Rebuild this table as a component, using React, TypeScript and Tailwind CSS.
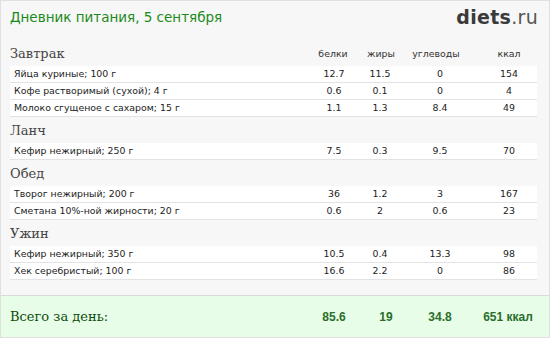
import React from "react";

type Item = { name: string; b: string; f: string; c: string; k: string };

const meals: { title: string; items: Item[] }[] = [
  {
    title: "Завтрак",
    items: [
      { name: "Яйца куриные; 100 г", b: "12.7", f: "11.5", c: "0", k: "154" },
      { name: "Кофе растворимый (сухой); 4 г", b: "0.6", f: "0.1", c: "0", k: "4" },
      { name: "Молоко сгущеное с сахаром; 15 г", b: "1.1", f: "1.3", c: "8.4", k: "49" },
    ],
  },
  {
    title: "Ланч",
    items: [{ name: "Кефир нежирный; 250 г", b: "7.5", f: "0.3", c: "9.5", k: "70" }],
  },
  {
    title: "Обед",
    items: [
      { name: "Творог нежирный; 200 г", b: "36", f: "1.2", c: "3", k: "167" },
      { name: "Сметана 10%-ной жирности; 20 г", b: "0.6", f: "2", c: "0.6", k: "23" },
    ],
  },
  {
    title: "Ужин",
    items: [
      { name: "Кефир нежирный; 350 г", b: "10.5", f: "0.4", c: "13.3", k: "98" },
      { name: "Хек серебристый; 100 г", b: "16.6", f: "2.2", c: "0", k: "86" },
    ],
  },
];

const sans = "font-['DejaVu_Sans',Verdana,sans-serif]";
const serif = "font-['DejaVu_Serif',Georgia,serif]";

function Row({ item }: { item: Item }) {
  return (
    <div className={`flex h-[17px] items-center border-b border-[#e3e3e3] bg-white text-[9.4px] leading-none text-[#222] ${sans}`}>
      <div className="flex-1 pl-[4px]">{item.name}</div>
      <div className="w-[48px] text-center">{item.b}</div>
      <div className="w-[44px] text-center">{item.f}</div>
      <div className="w-[76px] text-center">{item.c}</div>
      <div className="ml-[3px] w-[56px] text-center">{item.k}</div>
    </div>
  );
}

export default function App() {
  return (
    <div className="flex h-[338px] w-[550px] flex-col border border-[#e0e0e0] bg-[#f7f7f7] pl-[9px]">
      <div className="flex h-[39px] items-start justify-between pr-[11px] pt-[8px]">
        <div className={`text-[13.5px] leading-[16px] text-[#1a8a1a] ${sans}`}>Дневник питания, 5 сентября</div>
        <div className={`-mt-[1px] text-[19px] leading-[18px] tracking-[0.3px] ${sans}`}>
          <span className="font-bold text-[#3a3a3a]">diets</span>
          <span className="text-[#555]">.ru</span>
        </div>
      </div>

      <div className="pr-[12px]">
        {meals.map((meal, i) => (
          <div key={meal.title}>
            <div className="flex h-[26px] items-end pb-[6px]">
              <div className={`flex-1 text-[13px] leading-none text-[#444] ${serif}`}>{meal.title}</div>
              {i === 0 && (
                <div className={`flex pb-[2px] text-[9.4px] leading-none text-[#333] ${sans}`}>
                  <div className="w-[48px] text-center">белки</div>
                  <div className="w-[48px] text-center">жиры</div>
                  <div className="w-[62px] text-center">углеводы</div>
                  <div className="ml-[14px] w-[56px] text-center">ккал</div>
                </div>
              )}
            </div>
            {meal.items.map((it) => (
              <Row key={it.name} item={it} />
            ))}
          </div>
        ))}
      </div>

      <div className="flex-1" />

      <div className="-ml-[9px] flex h-[42px] items-center border-t border-[#dadada] bg-[#e8fde8] pl-[9px] pr-[12px]">
        <div className={`flex-1 text-[13px] leading-none text-[#0d4d0d] ${serif}`}>Всего за день:</div>
        <div className="flex font-['Liberation_Sans',Arial,sans-serif] text-[12px] font-bold leading-none text-[#2a6e2a]">
          <div className="w-[48px] text-center">85.6</div>
          <div className="w-[56px] text-center">19</div>
          <div className="w-[52px] text-center">34.8</div>
          <div className="ml-[14px] mr-[1px] w-[56px] text-center">651 ккал</div>
        </div>
      </div>
    </div>
  );
}
